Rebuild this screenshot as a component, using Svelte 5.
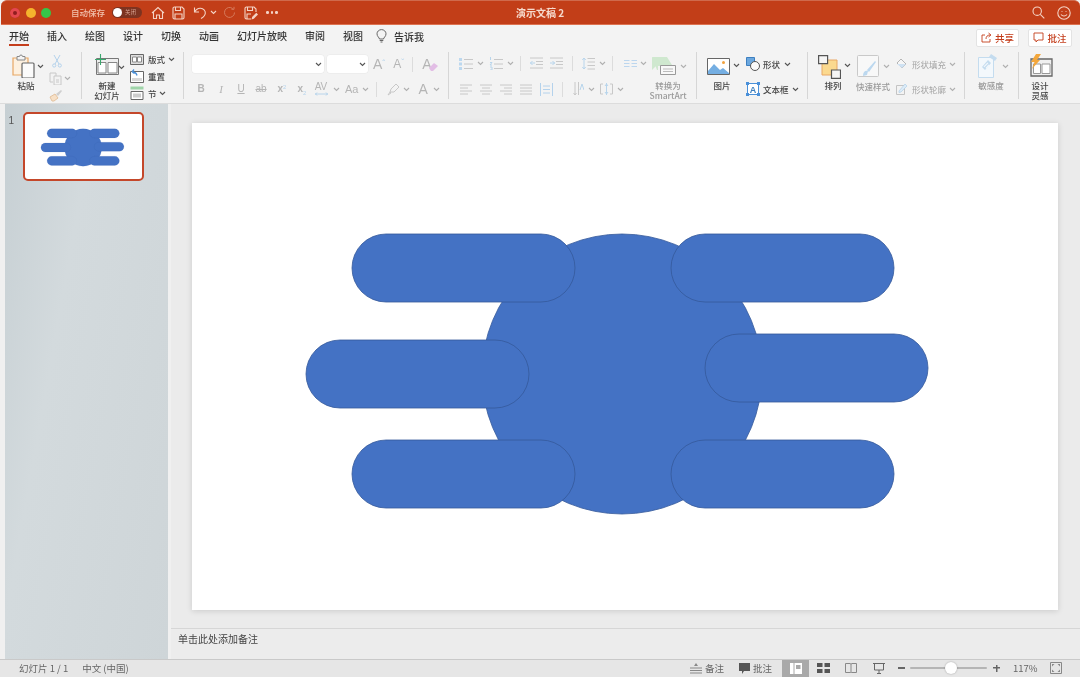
<script>
  const tabs = ['开始', '插入', '绘图', '设计', '切换', '动画', '幻灯片放映', '审阅', '视图'];
  const pills = [[160, 111], [479, 111], [114, 217], [513, 211], [160, 317], [479, 317]];
</script>

{#snippet chev(dark = false)}
  <svg class="chev" class:dark width="7" height="5" viewBox="0 0 7 5"><path d="M1 1l2.500 2.500L6 1" /></svg>
{/snippet}

{#snippet sep()}
  <span class="vsep"></span>
{/snippet}

{#snippet diagram()}
  <svg class="diagram" viewBox="0 0 866 487">
    <circle cx="430" cy="251" r="140" />
    {#each pills as p}
      <rect x={p[0]} y={p[1]} width="223" height="68" rx="34" />
    {/each}
  </svg>
{/snippet}

<div class="window">
  <header class="titlebar">
    <div class="lights">
      <span class="light red"></span><span class="light yellow"></span><span class="light green"></span>
    </div>
    <span class="autosave">自动保存</span>
    <span class="toggle"><span class="knob"></span><span class="off">关闭</span></span>
    <svg class="tb ml9" width="14" height="14" viewBox="0 0 14 14"><path d="M1 7l6-5.500L13 7M2.500 6v6.500h3V9h3v3.500h3V6" /></svg>
    <svg class="tb ml7" width="13" height="14" viewBox="0 0 13 14"><path d="M1 2.500A1.500 1.500 0 0 1 2.500 1H10l2 2v8.500a1.500 1.500 0 0 1-1.500 1.500h-8A1.500 1.500 0 0 1 1 11.500zM3.500 1v3.500h5V1M3 13V8h7v5" /></svg>
    <svg class="tb ml8" width="14" height="14" viewBox="0 0 14 14"><path d="M1.500 1.500v4.500H6M1.500 6C3 3.500 5 2 7.500 2.200c3 .2 5 2.500 4.800 5-.2 2.300-2 4-4.300 5.300" /></svg>
    <svg class="chev tbchev ml3" width="7" height="5" viewBox="0 0 7 5"><path d="M1 1l2.500 2.500L6 1" /></svg>
    <svg class="redo ml6" width="13" height="13" viewBox="0 0 13 13"><path d="M11.500 6.500a5 5 0 1 1-1.800-3.900M11 .8v2.500H8.500" /></svg>
    <svg class="tb ml8" width="14" height="14" viewBox="0 0 14 14"><path d="M7 13H2.500A1.500 1.500 0 0 1 1 11.500v-9A1.500 1.500 0 0 1 2.500 1H10l2 2v3M3.500 1v3.500h5V1M3 13V8h4" /><path class="solid" d="M7.500 13.500l.6-2.500 4.200-4.200 1.700 1.700-4.200 4.200z" /></svg>
    <span class="dots ml8"><i></i><i></i><i></i></span>
    <span class="doc">演示文稿 2</span>
    <svg class="tb search" width="13" height="13" viewBox="0 0 13 13"><circle cx="5.200" cy="5.200" r="4.200" /><path d="M8.300 8.300l4 4" /></svg>
    <svg class="tb smile" width="14" height="14" viewBox="0 0 14 14"><circle cx="7" cy="7" r="6.200" /><path d="M4 8.500c1.500 2 4.500 2 6 0" /><path d="M5 5v.8M9 5v.8" /></svg>
  </header>

  <section class="ribbon">
    <nav class="tabs">
      {#each tabs as t, i}
        <span class="tab" class:active={i === 0}>{t}</span>
      {/each}
      <svg class="bulb" width="11" height="14" viewBox="0 0 11 14"><path d="M3.500 10C3.300 8.500 1 7.500 1 4.800a4.500 4.200 0 0 1 9 0C10 7.500 7.700 8.500 7.500 10zM3.700 11.500h3.600M4.500 13h2" /></svg>
      <span class="tell">告诉我</span>
      <span class="grow"></span>
      <button class="share">
        <svg width="11" height="11" viewBox="0 0 11 11"><path d="M4 3H1v7h8V7M5 7c0-2.500 1.500-4 4-4M7.500 1L10 3 7.500 5" /></svg>共享
      </button>
      <button class="share note">
        <svg width="11" height="11" viewBox="0 0 11 11"><path d="M1 1h9v7H5L3 10V8H1z" /></svg>批注
      </button>
    </nav>

    <div class="tools">
      <div class="g g1">
        <div class="big w28">
          <div class="bigicon">
            <svg width="24" height="24" viewBox="0 0 24 24">
              <path fill="#fdf0df" stroke="#e8a765" stroke-width="1.200" d="M1 4h15v17H1z" />
              <path fill="#f3f3f3" stroke="#888" d="M5 2.500h2.500a1.500 1.500 0 0 1 3 0H13V6H5z" />
              <rect x="10" y="9" width="12" height="15" rx="1" fill="#fbfbfb" stroke="#666" stroke-width="1.200" />
            </svg>
          </div>
          <span class="label">粘贴</span>
        </div>
        <div class="afterpaste">{@render chev(true)}</div>
        <div class="smallcol ml5">
          <svg class="ico blue cut" width="10" height="14" viewBox="0 0 10 14"><path d="M2 1l5 9M8 1L3 10" /><circle cx="2.200" cy="11.500" r="1.600" /><circle cx="7.800" cy="11.500" r="1.600" /></svg>
          <span class="rowc"><svg width="13" height="13" viewBox="0 0 13 13" class="ico"><path d="M1 1h6v3M1 1v9h3M5 4h7v9H5z" /><path d="M7 8h3M7 10h3" /></svg><span class="ml2">{@render chev()}</span></span>
          <svg width="14" height="13" viewBox="0 0 14 13"><path fill="#f7e0c6" stroke="#e3c3a0" d="M1 8l5-3 3 4-4 3H3z" /><path fill="#cfcfcf" d="M7 5l5-4 1 1-4 5z" /></svg>
        </div>
      </div>
      {@render sep()}
      <div class="g g2">
        <div class="big w32">
          <svg width="25" height="22" viewBox="0 0 25 22">
            <path fill="#efefef" stroke="#777" d="M1.500 4.500h22v16h-22z" />
            <path fill="#fff" stroke="#888" d="M3 8.500h8v10.500H3zM13 8.500h9v10.500h-9z" />
            <path stroke="#3aa76d" stroke-width="1.100" fill="none" d="M5.500 0v11M0 5.500h11" />
          </svg>
          <span class="label two">新建<br />幻灯片</span>
        </div>
        <div class="afterbig">{@render chev(true)}</div>
        <div class="layoutcol ml5">
          <span class="rowc"><svg width="14" height="13" viewBox="0 0 14 13"><path fill="#dedede" stroke="#666" d="M.5 1.500h13v10H.5z" /><path fill="#fff" stroke="#888" d="M2.500 4h4v5h-4zM7.500 4h4v5h-4z" /></svg><span class="txt ml4">版式</span><span class="ml3">{@render chev(true)}</span></span>
          <span class="rowc"><svg width="14" height="14" viewBox="0 0 14 14"><path fill="#fff" stroke="#666" d="M.5 2.500h13v11H.5z" /><path fill="#d8d8d8" d="M2 9h10v3H2z" /><path fill="none" stroke="#4a90d9" stroke-width="1.300" d="M2 3l2-2.500M2 3l2.500 1.500M2 3c3 0 4.500 1 5 3.500" /></svg><span class="txt ml4">重置</span></span>
          <span class="rowc"><svg width="14" height="14" viewBox="0 0 14 14"><path fill="#9fd4a9" d="M.5.500h13v3H.5z" /><path fill="#fff" stroke="#666" d="M1 5.500h12v8H1z" /><path fill="#ccc" d="M3 7.500h8v4H3z" /></svg><span class="txt ml4">节</span><span class="ml2">{@render chev(true)}</span></span>
        </div>
      </div>
      {@render sep()}
      <div class="g g3">
        <div class="row r1">
          <span class="select s1">{@render chev(true)}</span>
          <span class="select s2 ml3">{@render chev(true)}</span>
          <span class="ga big12 ml5">A<sup>ˆ</sup></span>
          <span class="ga big10 ml8">A<sup class="bl">ˇ</sup></span>
          <span class="isep ml8"></span>
          <span class="eraser ml9"><span class="ga big12">A</span><svg width="9" height="8" viewBox="0 0 9 8"><path fill="#e2bde5" d="M0 5l5-5 4 3-5 5H2z" /></svg></span>
        </div>
        <div class="row r2">
          <span class="ga w20 bold">B</span>
          <span class="ga w20 ital">I</span>
          <span class="ga w20 und">U</span>
          <span class="ga w20 strike">ab</span>
          <span class="ga w22 bold2">x<sup class="tiny">2</sup></span>
          <span class="ga w18 bold2">x<sub class="tiny">2</sub></span>
          <span class="ga av"><span>AV</span><svg width="13" height="4" viewBox="0 0 13 4"><path d="M0 2h13M2 .5L.5 2 2 3.500M11 .5L12.500 2 11 3.500" /></svg></span>
          <span class="ml5">{@render chev()}</span>
          <span class="ga aa ml5">Aa</span>
          <span class="ml4">{@render chev()}</span>
          <span class="isep ml7"></span>
          <svg class="ico ml10" width="13" height="13" viewBox="0 0 13 13"><path d="M3 9l1-3 5-5 3 3-5 5zM1 12l2-3 1 1z" /></svg>
          <span class="ml3">{@render chev()}</span>
          <span class="ga big12 ml8">A</span>
          <span class="ml5">{@render chev()}</span>
        </div>
      </div>
      {@render sep()}
      <div class="g g4">
        <div class="paracol">
          <div class="row r1 small">
            <svg class="ico" width="14" height="13" viewBox="0 0 14 13"><path class="bluefill" d="M0 1h3v3H0zM0 5.500h3v3H0zM0 10h3v3H0z" /><path d="M5 2.500h9M5 7h9M5 11.500h9" /></svg>
            <span class="ml4">{@render chev()}</span>
            <svg class="ico ml5" width="14" height="13" viewBox="0 0 14 13"><path class="bluestroke" d="M1.500 0v3M1 5.500h2l-2 2.500h2M1 10h2v3H1" /><path d="M5 2.500h9M5 7h9M5 11.500h9" /></svg>
            <span class="ml4">{@render chev()}</span>
            <span class="isep ml6"></span>
            <svg class="ico ml9" width="13" height="12" viewBox="0 0 13 12"><path d="M0 1h13M6 4.500h7M6 7.500h7M0 11h13" /><path class="bluestroke" d="M5 6H0M2.500 4L.5 6l2 2" /></svg>
            <svg class="ico ml7" width="13" height="12" viewBox="0 0 13 12"><path d="M0 1h13M6 4.500h7M6 7.500h7M0 11h13" /><path class="bluestroke" d="M0 6h5M2.500 4l2 2-2 2" /></svg>
            <span class="isep ml9"></span>
            <svg class="ico ml9" width="13" height="13" viewBox="0 0 13 13"><path class="bluestroke" d="M2 1v11M.3 3L2 1l1.700 2M.3 10L2 12l1.700-2" /><path d="M5.500 1.500H13M5.500 5h7.500M5.500 8.500H13M5.500 12H13" /></svg>
            <span class="ml4">{@render chev()}</span>
            <span class="isep ml6"></span>
            <svg class="ml11" width="13" height="9" viewBox="0 0 13 9"><path fill="none" stroke="#bcd6ee" d="M0 1.500h5.500M0 4.500h5.500M0 7.500h5.500M7.500 1.500H13M7.500 4.500H13M7.500 7.500H13" /></svg>
            <span class="ml3">{@render chev()}</span>
          </div>
          <div class="row r2 small">
            <svg class="ico ml1" width="12" height="11" viewBox="0 0 12 11"><path d="M0 1h12M0 4h8M0 7h12M0 10h8" /></svg>
            <svg class="ico ml8" width="12" height="11" viewBox="0 0 12 11"><path d="M0 1h12M2 4h8M0 7h12M2 10h8" /></svg>
            <svg class="ico ml8" width="12" height="11" viewBox="0 0 12 11"><path d="M0 1h12M4 4h8M0 7h12M4 10h8" /></svg>
            <svg class="ico ml8" width="12" height="11" viewBox="0 0 12 11"><path d="M0 1h12M0 4h12M0 7h12M0 10h12" /></svg>
            <svg class="ico blueico ml8" width="13" height="13" viewBox="0 0 13 13"><path d="M.5 0v13M12.500 0v13M3 3h7M3 6.500h7M3 10h7" /></svg>
            <span class="isep ml9"></span>
            <svg class="ico ml10" width="11" height="14" viewBox="0 0 11 14"><path d="M2 0v13M.5 11L2 13l1.500-2M5.500 0v13" /><path d="M7 8l2-6 2 6" class="bluestroke" /></svg>
            <span class="ml4">{@render chev()}</span>
            <svg class="ico ml5" width="13" height="12" viewBox="0 0 13 12"><path d="M3 1H.5v10H3M10 1h2.500v10H10" /><path class="bluestroke" d="M6.500 0v12M5 3l1.500-2L8 3M5 9l1.500 2L8 9" /></svg>
            <span class="ml4">{@render chev()}</span>
          </div>
        </div>
        <div class="big w42">
          <span class="rowc smart">
            <svg width="24" height="18" viewBox="0 0 24 18"><path fill="#cfe8cf" d="M0 0h15l5 8-6 1H6v4H5z" /><path fill="#cfe8cf" d="M0 0l6 7-6 6z" /><path fill="#f8f8f8" stroke="#999" d="M8.500 8.500h15v9h-15z" /><path stroke="#bbb" d="M11 12h10M11 14.500h10" /></svg>
            <span class="ml4">{@render chev()}</span>
          </span>
          <span class="label two gray smartlabel">转换为<br />SmartArt</span>
        </div>
      </div>
      {@render sep()}
      <div class="g g5">
        <div class="big w30">
          <svg class="pic" width="23" height="17" viewBox="0 0 23 17"><path fill="#fff" stroke="#666" d="M.5.500h22v16H.5z" /><path fill="#74aee2" d="M1 13l6-7 6 6 3-2 6 5v1H1z" /><circle cx="16.500" cy="4.500" r="1.500" fill="#f2a23e" /></svg>
          <span class="label picl">图片</span>
        </div>
        <div class="afterpic">{@render chev(true)}</div>
        <div class="shapecol ml6">
          <span class="rowc"><svg width="14" height="14" viewBox="0 0 14 14"><path fill="#6ba7de" stroke="#3d7fc0" d="M.5.500h8v8h-8z" /><circle cx="9" cy="9" r="4.500" fill="#fafafa" stroke="#555" /></svg><span class="txt ml3">形状</span><span class="ml4">{@render chev(true)}</span></span>
          <span class="rowc"><svg width="14" height="14" viewBox="0 0 14 14"><path fill="#fff" stroke="#4a90d9" d="M1.500 1.500h11v11h-11z" /><path fill="#4a90d9" d="M0 0h3v3H0zM11 0h3v3h-3zM0 11h3v3H0zM11 11h3v3h-3z" /><text x="7" y="10.500" text-anchor="middle" class="svgt">A</text></svg><span class="txt ml3">文本框</span><span class="ml3">{@render chev(true)}</span></span>
        </div>
      </div>
      {@render sep()}
      <div class="g g6">
        <div class="big w30">
          <span class="rowc arr">
            <svg width="23" height="24" viewBox="0 0 23 24"><path fill="#fbd98f" stroke="#e8a765" d="M4 5h15v15H4z" /><path fill="#f5f5f5" stroke="#555" stroke-width="1.200" d="M.6.600h9v8h-9zM13.500 15h9v8.400h-9z" /></svg>
          </span>
          <span class="label arrl">排列</span>
        </div>
        <div class="afterpic2">{@render chev(true)}</div>
        <div class="big w36 ml4">
          <span class="rowc quick">
            <svg width="22" height="23" viewBox="0 0 22 23"><path fill="#f8f8f8" stroke="#c9c9c9" d="M1.500.500h19a1 1 0 0 1 1 1v19a1 1 0 0 1-1 1h-19a1 1 0 0 1-1-1v-19a1 1 0 0 1 1-1z" /><path fill="#bcd8ef" d="M6 21c0-4 2-6 5-5l-1 4zM10 15l8-9 1 1-7 10z" /></svg>
            <span class="ml4">{@render chev()}</span>
          </span>
          <span class="label gray">快速样式</span>
        </div>
        <div class="shapecol ml5">
          <span class="rowc"><svg width="12" height="12" viewBox="0 0 12 12"><path fill="#f6f6f6" stroke="#b5b5b5" d="M5 1l5 5-4 4-5-5z" /><path fill="#cfe2f3" d="M1 6h9l-4 4z" /></svg><span class="txt gray ml4">形状填充</span><span class="ml3">{@render chev()}</span></span>
          <span class="rowc"><svg width="12" height="12" viewBox="0 0 12 12"><path fill="none" stroke="#c4c4c4" d="M.5 2.500h8v9h-8z" /><path fill="#dcebf7" stroke="#a8cbe8" stroke-width=".6" d="M3 8l6-7 2 2-6 6-2 .5z" /></svg><span class="txt gray ml4">形状轮廓</span><span class="ml3">{@render chev()}</span></span>
        </div>
      </div>
      {@render sep()}
      <div class="g g7">
        <div class="big w26">
          <span class="rowc sens">
            <svg width="19" height="24" viewBox="0 0 19 24"><path fill="#f3f8fc" stroke="#c4dcef" d="M.5 3.500h15v20H.5z" /><path fill="#c4dcef" d="M4 13l6-7 3 3-6 7zM11 3l2-3 6 4-2 3z" /><path fill="#f3f8fc" d="M5.500 12.500l4-4 .8.800-4 4zM7.500 14l3-3.500.8.800-3 3.500z" /></svg>
            <span class="ml5">{@render chev()}</span>
          </span>
          <span class="label gray">敏感度</span>
        </div>
      </div>
      {@render sep()}
      <div class="g g8">
        <div class="big w26">
          <svg width="25" height="24" viewBox="0 0 25 24"><path fill="#f0f0f0" stroke="#666" stroke-width="1.300" d="M3 5h21v17H3z" /><path fill="#fff" stroke="#999" d="M5.500 10h7v9.500h-7zM14 10h8v9.500h-8z" /><path fill="#f3a73c" d="M8 0h5L9 6h3l-8 9 2.500-7H3z" /></svg>
          <span class="label two">设计<br />灵感</span>
        </div>
      </div>
    </div>
  </section>

  <main class="main">
    <aside class="sidebar">
      <span class="num">1</span>
      <div class="thumb">{@render diagram()}</div>
    </aside>
    <div class="canvas">
      <div class="stage">
        <div class="slide">{@render diagram()}</div>
      </div>
      <div class="notes">单击此处添加备注</div>
    </div>
  </main>

  <footer class="status">
    <span class="st first">幻灯片 1 / 1</span>
    <span class="st lang">中文 (中国)</span>
    <span class="grow"></span>
    <svg class="sticon" width="12" height="11" viewBox="0 0 12 11"><path fill="#888" d="M4 3l2-3 2 3z" /><path stroke="#888" d="M0 5h12M0 7.500h12M0 10h12" /></svg>
    <span class="st ml3">备注</span>
    <svg class="sticon ml15" width="11" height="11" viewBox="0 0 11 11"><path fill="#555" d="M0 0h11v8H5l-2 3V8H0z" /></svg>
    <span class="st ml3">批注</span>
    <span class="viewbtn">
      <svg width="12" height="11" viewBox="0 0 12 11"><path fill="#fff" d="M0 0h3.500v11H0zM4.500 0H12v11H4.500z" /><path fill="#a9a9a9" d="M6 2h4.500v4H6z" /></svg>
    </span>
    <svg class="ml8" width="13" height="10" viewBox="0 0 13 10"><path fill="#555" d="M0 0h5.500v4H0zM7.500 0H13v4H7.500zM0 6h5.500v4H0zM7.500 6H13v4H7.500z" /></svg>
    <svg class="ml15" width="12" height="10" viewBox="0 0 12 10"><path fill="none" stroke="#888" d="M.5.500h4.500a1 1 0 0 1 1 1 1 1 0 0 1 1-1h4.500v9H7a1 1 0 0 0-1 .5 1 1 0 0 0-1-.5H.5zM6 1.500v8" /></svg>
    <svg class="ml16" width="12" height="11" viewBox="0 0 12 11"><path fill="none" stroke="#666" d="M0 .5h12M1.500 .5v6.500h9V.5M6 7v3M4 10.500h4" /></svg>
    <span class="zoomminus"></span>
    <span class="slider"><span class="thumbknob"></span></span>
    <span class="zoomplus"></span>
    <span class="st pct">117%</span>
    <svg class="fit" width="12" height="12" viewBox="0 0 12 12"><path fill="none" stroke="#888" d="M.5.500h11v11H.5z" /><path fill="#888" d="M2 2h2.500L2 4.500zM10 2v2.500L7.500 2zM2 10V7.500L4.500 10zM10 10H7.500L10 7.500z" /></svg>
  </footer>
</div>

<style>
  :global(body) {
    margin: 0;
    background: #eef1f3;
  }
  .window {
    width: 1080px;
    height: 677px;
    display: flex;
    flex-direction: column;
    overflow: hidden;
    filter: blur(0.35px);
    font-family: "Noto Sans CJK SC", "Noto Sans", sans-serif;
    color: #444;
    background: #f1f1f1;
  }
  .titlebar {
    flex: none;
    display: flex;
    align-items: center;
    position: relative;
    background: #c23e18;
    border-top: 1px solid #cf6a4c;
    border-bottom: 1px solid #dd7250;
    box-sizing: border-box;
    height: 25px;
    border-radius: 6px 6px 0 0;
    margin-left: 1px;
  }
  .lights {
    display: flex;
    gap: 5.500px;
    margin-left: 9px;
  }
  .light {
    width: 10px;
    height: 10px;
    border-radius: 50%;
  }
  .red {
    background: #e5484d;
    box-shadow: inset 0 0 0 3px #e5484d, inset 0 0 0 6px #8f1d1f;
  }
  .yellow {
    background: #f5b32d;
  }
  .green {
    background: #35c649;
  }
  .autosave {
    margin-left: 20px;
    font-size: 8.500px;
    line-height: 1;
    color: #f2c4b0;
    font-weight: 500;
    white-space: nowrap;
  }
  .toggle {
    margin-left: 7px;
    width: 30px;
    height: 11px;
    border-radius: 6px;
    background: #7d3320;
    display: flex;
    align-items: center;
    padding-left: 1px;
    box-sizing: border-box;
  }
  .knob {
    width: 9px;
    height: 9px;
    border-radius: 50%;
    background: #fff;
  }
  .off {
    font-size: 5.500px;
    line-height: 1;
    color: #d9a694;
    margin-left: 3px;
    white-space: nowrap;
  }
  .tb {
    fill: none;
    stroke: #f4d3c5;
    stroke-width: 1.100;
    flex: none;
  }
  .tb .solid {
    fill: #f4d3c5;
    stroke: none;
  }
  .tbchev path {
    stroke: #f4d3c5;
  }
  .redo {
    fill: none;
    stroke: #d67a5c;
    stroke-width: 1;
    flex: none;
  }
  .dots {
    display: flex;
    gap: 2px;
  }
  .dots i {
    width: 2.500px;
    height: 2.500px;
    border-radius: 50%;
    background: #f4d3c5;
  }
  .doc {
    position: absolute;
    left: 515px;
    top: 4px;
    font-size: 10px;
    line-height: 15px;
    font-weight: 700;
    color: #f6dacd;
    white-space: nowrap;
  }
  .search {
    position: absolute;
    left: 1031px;
    top: 5px;
  }
  .smile {
    position: absolute;
    left: 1056px;
    top: 5px;
  }

  .ribbon {
    flex: none;
    background: #f3f3f3;
    border-bottom: 1px solid #dcdcdc;
    box-sizing: border-box;
    height: 79px;
    display: flex;
    flex-direction: column;
  }
  .tabs {
    height: 22px;
    flex: none;
    display: flex;
    align-items: center;
    padding-left: 9px;
    gap: 18px;
    padding-right: 8px;
    box-sizing: border-box;
  }
  .tab {
    font-size: 10px;
    font-weight: 500;
    line-height: 18px;
    color: #333;
    position: relative;
    white-space: nowrap;
  }
  .tab.active::after {
    content: "";
    position: absolute;
    left: 0;
    right: 0;
    bottom: -1px;
    height: 2px;
    background: #c43e1c;
  }
  .bulb {
    margin-left: -5px;
    fill: none;
    stroke: #666;
  }
  .tell {
    font-size: 10px;
    font-weight: 500;
    color: #333;
    margin-left: -11px;
  }
  .grow {
    flex: 1;
  }
  .share {
    width: 43px;
    height: 18px;
    border: 1px solid #e3e3e3;
    border-radius: 2px;
    background: #fff;
    padding: 0;
    display: flex;
    align-items: center;
    justify-content: center;
    gap: 3px;
    font: 500 9.500px "Noto Sans CJK SC", sans-serif;
    color: #c43e1c;
    margin-top: 3px;
  }
  .share.note {
    width: 44px;
    margin-left: -9px;
  }
  .share svg {
    fill: none;
    stroke: #c43e1c;
    stroke-width: 0.900;
  }

  .tools {
    flex: 1;
    display: flex;
  }
  .g {
    display: flex;
    flex: none;
    box-sizing: border-box;
    padding-top: 7px;
  }
  .vsep {
    width: 1px;
    height: 47px;
    margin-top: 5px;
    background: #d6d6d6;
    flex: none;
  }
  .g1 {
    width: 81px;
    padding-left: 12px;
  }
  .g2 {
    width: 101px;
    padding-left: 9px;
  }
  .g3 {
    width: 264px;
    padding-left: 8px;
    flex-direction: column;
    padding-top: 8px;
  }
  .g4 {
    width: 247px;
  }
  .paracol {
    width: 198px;
    padding-left: 10px;
    box-sizing: border-box;
  }
  .g5 {
    width: 110px;
    padding-left: 10px;
  }
  .g6 {
    width: 156px;
    padding-left: 10px;
  }
  .g7 {
    width: 53px;
    padding-left: 13px;
  }
  .g8 {
    width: 61px;
    padding-left: 8px;
  }

  .big {
    display: flex;
    flex-direction: column;
    align-items: center;
    flex: none;
    position: relative;
  }
  .w26 { width: 26px; }
  .w28 { width: 28px; align-items: flex-start; }
  .w30 { width: 30px; align-items: flex-start; }
  .w32 { width: 32px; }
  .w36 { width: 36px; align-items: center; }
  .w42 { width: 42px; }
  .bigicon {
    height: 26px;
  }
  .label {
    font-size: 8.500px;
    line-height: 10px;
    font-weight: 500;
    color: #444;
    text-align: center;
    white-space: nowrap;
  }
  .w28 .label {
    width: 28px;
    margin-top: 0;
  }
  .w30 .label {
    width: 30px;
    margin-top: 1px;
  }
  .w32 .label {
    margin-top: 4px;
  }
  .w26 .label {
    margin-top: 2px;
  }
  .w36 .label {
    margin-top: 3px;
  }
  .two {
    line-height: 10px;
  }
  .gray {
    color: #9a9a9a;
  }
  .smart {
    align-self: flex-start;
    padding-left: 5px;
    padding-top: 3px;
  }
  .smartlabel {
    margin-top: 5px;
  }
  .pic {
    margin-top: 4px;
  }
  .w30 .picl {
    width: 30px;
    margin-top: 5px;
  }
  .rowc {
    display: flex;
    align-items: center;
    white-space: nowrap;
    flex: none;
  }
  .arr {
    height: 25px;
  }
  .quick {
    padding-top: 1px;
  }
  .sens {
    align-self: flex-start;
  }
  .afterpaste {
    margin-top: 10px;
    margin-left: -3px;
  }
  .afterbig {
    margin-top: 11px;
    margin-left: -5px;
  }
  .afterpic {
    margin-top: 9px;
    margin-left: -4px;
  }
  .afterpic2 {
    margin-top: 9px;
    margin-left: -4px;
  }
  .smallcol {
    display: flex;
    flex-direction: column;
    gap: 4px;
  }
  .cut {
    margin-left: 3px;
  }
  .layoutcol {
    display: flex;
    flex-direction: column;
    gap: 3px;
    margin-top: -2px;
  }
  .shapecol {
    display: flex;
    flex-direction: column;
    gap: 11px;
    padding-top: 3px;
  }
  .txt {
    font-size: 8.500px;
    line-height: 14px;
    font-weight: 500;
    color: #444;
  }
  .txt.gray {
    color: #a3a3a3;
    font-weight: 400;
  }
  .chev {
    display: block;
    flex: none;
    fill: none;
    stroke: #b0b0b0;
    stroke-width: 1.100;
  }
  .chev.dark {
    stroke: #555;
  }
  .ico {
    fill: none;
    stroke: #c8c8c8;
    stroke-width: 1;
    flex: none;
  }
  .ico.blue {
    stroke: #b4d2ec;
  }
  .blueico {
    stroke: #b4d2ec;
  }
  .bluefill {
    fill: #bcd8ef;
    stroke: none;
  }
  .bluestroke {
    stroke: #b8d5ec;
  }
  .row {
    display: flex;
    align-items: center;
  }
  .r1 {
    height: 18px;
  }
  .r2 {
    height: 18px;
    margin-top: 7px;
    margin-left: -1px;
  }
  .small.r2 {
    margin-left: 0;
    margin-top: 8px;
  }
  .select {
    height: 18px;
    background: #fff;
    border-radius: 3px;
    display: flex;
    align-items: center;
    justify-content: flex-end;
    padding-right: 2px;
    box-sizing: border-box;
    box-shadow: 0 0 0 0.500px #e8e8e8;
    flex: none;
  }
  .s1 {
    width: 132px;
  }
  .s2 {
    width: 41px;
  }
  .ga {
    font-family: "Liberation Sans", Arial, sans-serif;
    color: #b5b5b5;
    font-size: 10px;
    line-height: 14px;
    text-align: center;
    flex: none;
    white-space: nowrap;
  }
  .big12 {
    font-size: 14px;
  }
  .big10 {
    font-size: 12px;
  }
  .ga sup {
    font-size: 9px;
    line-height: 0;
    color: #b8d5ec;
    vertical-align: 3px;
  }
  .eraser {
    display: flex;
    align-items: flex-end;
  }
  .eraser svg {
    margin-left: -3px;
  }
  .isep {
    width: 1px;
    height: 15px;
    background: #dcdcdc;
    flex: none;
  }
  .w20 { width: 20px; }
  .w22 { width: 22px; }
  .w18 { width: 18px; }
  .bold {
    font-weight: 700;
  }
  .ital {
    font-style: italic;
    font-family: "Liberation Serif", serif;
    font-size: 11px;
  }
  .und {
    text-decoration: underline;
  }
  .strike {
    text-decoration: line-through;
  }
  .bold2 {
    font-weight: 700;
  }
  .ga .tiny {
    font-size: 6px;
    line-height: 0;
    color: #b8d5ec;
    font-weight: 400;
  }
  .av {
    display: flex;
    flex-direction: column;
    align-items: center;
    width: 14px;
    margin-left: 3px;
    line-height: 9px;
    font-size: 10px;
  }
  .av svg {
    fill: none;
    stroke: #a8cbe8;
    stroke-width: 0.800;
    margin-top: 1px;
  }
  .aa {
    font-size: 11px;
  }
  .svgt {
    font: 700 9px "Liberation Sans", sans-serif;
    fill: #3f7fbd;
  }

  .main {
    flex: 1;
    min-height: 0;
    display: flex;
    background: #f0f0f0;
    padding-left: 5px;
  }
  .sidebar {
    width: 163px;
    flex: none;
    background: linear-gradient(100deg, #c6cfd3 0%, #d3dadd 35%, #ced5d8 100%);
    display: flex;
    align-items: flex-start;
    padding-top: 8px;
    box-sizing: border-box;
    margin-right: 3px;
  }
  .num {
    font: 10px/16px "Liberation Sans", sans-serif;
    color: #555;
    width: 18px;
    text-align: right;
    flex: none;
    margin: 1px 9px 0 -9px;
  }
  .thumb {
    width: 121px;
    height: 69px;
    box-sizing: border-box;
    border: 2.500px solid #c4472a;
    border-radius: 5px;
    background: #fff;
    display: flex;
    overflow: hidden;
  }
  .diagram {
    width: 100%;
    height: 100%;
    display: block;
  }
  .diagram circle,
  .diagram rect {
    fill: #4472c4;
    stroke: #35599b;
    stroke-width: 0.800;
  }
  .canvas {
    flex: 1;
    min-width: 0;
    display: flex;
    flex-direction: column;
    background: #ebebeb;
  }
  .stage {
    height: 524px;
    flex: none;
    padding: 19px 0 0 21px;
    box-sizing: border-box;
  }
  .slide {
    width: 866px;
    height: 487px;
    background: #fff;
    box-shadow: 0 1px 6px rgba(0, 0, 0, 0.14);
  }
  .notes {
    flex: 1;
    border-top: 1px solid #d6d6d6;
    background: #ececec;
    font-size: 10px;
    line-height: 20px;
    padding: 0 0 0 7px;
    color: #444;
  }
  .status {
    height: 18px;
    flex: none;
    display: flex;
    align-items: center;
    background: #e6e6e6;
    border-top: 1px solid #c9c9c9;
    box-sizing: border-box;
    padding-left: 19px;
    padding-bottom: 1px;
  }
  .st {
    font-size: 9.500px;
    color: #666;
    line-height: 14px;
    white-space: nowrap;
  }
  .lang {
    margin-left: 14px;
  }
  .sticon {
    flex: none;
  }
  .viewbtn {
    width: 27px;
    align-self: stretch;
    margin: 0 0 -1px 10px;
    background: #a9a9a9;
    display: flex;
    align-items: center;
    justify-content: center;
  }
  .zoomminus {
    width: 7px;
    height: 1.500px;
    background: #666;
    margin-left: 13px;
  }
  .slider {
    width: 77px;
    height: 2px;
    margin-left: 5px;
    background: #b5b5b5;
    border-radius: 1px;
    position: relative;
  }
  .thumbknob {
    position: absolute;
    left: 35px;
    top: -5px;
    width: 12px;
    height: 12px;
    border-radius: 50%;
    background: #fff;
    box-shadow: 0 0 2px rgba(0, 0, 0, 0.3);
  }
  .zoomplus {
    width: 7px;
    height: 7px;
    margin-left: 6px;
    background:
      linear-gradient(#666, #666) center / 7px 1.500px no-repeat,
      linear-gradient(#666, #666) center / 1.500px 7px no-repeat;
  }
  .pct {
    margin-left: 13px;
    width: 24px;
  }
  .fit {
    margin-left: 13px;
    margin-right: 18px;
  }
  .ml1 { margin-left: 1px; }
  .ml2 { margin-left: 2px; }
  .ml3 { margin-left: 3px; }
  .ml4 { margin-left: 4px; }
  .ml5 { margin-left: 5px; }
  .ml6 { margin-left: 6px; }
  .ml7 { margin-left: 7px; }
  .ml8 { margin-left: 8px; }
  .ml9 { margin-left: 9px; }
  .ml10 { margin-left: 10px; }
  .ml11 { margin-left: 11px; }
  .ml15 { margin-left: 15px; }
  .ml16 { margin-left: 16px; }
</style>
